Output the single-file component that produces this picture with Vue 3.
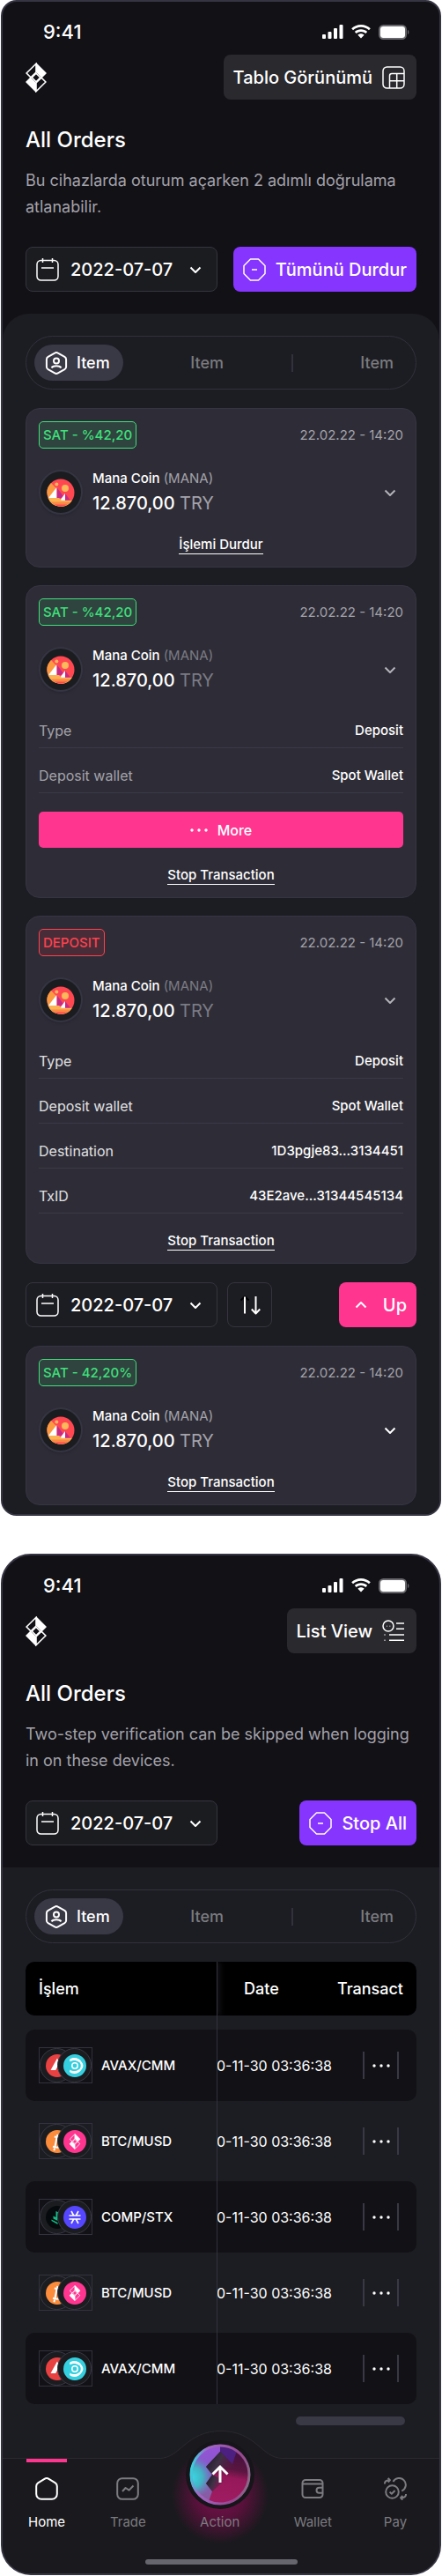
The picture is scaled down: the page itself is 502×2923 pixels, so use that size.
<template>
  <div class="screens">
    <!-- Shared icons -->
    <svg class="sprite" width="0" height="0" aria-hidden="true">
      <symbol id="i-logo" viewBox="0 0 24 34">
        <path d="M12 0 24 12 18.500 17.500 12 11ZM12 34 0 22 5.500 16.500 12 23Z" fill="#fff" />
        <path d="M12 1.200 1.100 12 6 16.900 12 11ZM12 32.800 22.900 22 18 17.100 12 23ZM12 12.200 16.800 17 12 21.800 7.200 17Z" fill="none" stroke="#fff" stroke-width="1.600" />
      </symbol>
      <symbol id="i-signal" viewBox="0 0 24 16">
        <rect x="0" y="11" width="4" height="5" rx="1" />
        <rect x="6.500" y="8" width="4" height="8" rx="1" />
        <rect x="13" y="4" width="4" height="12" rx="1" />
        <rect x="19.500" y="0" width="4" height="16" rx="1" />
      </symbol>
      <symbol id="i-wifi" viewBox="0 0 22 16">
        <path d="M11 0C6.800 0 3 1.600 0.200 4.300L2 6.200C4.400 3.900 7.500 2.700 11 2.700S17.600 3.900 20 6.200L21.800 4.300C19 1.600 15.200 0 11 0ZM11 5.200C8.200 5.200 5.700 6.200 3.800 8L5.700 9.900C7.100 8.600 9 7.900 11 7.900S14.900 8.600 16.300 9.900L18.200 8C16.300 6.200 13.800 5.200 11 5.200ZM11 10.300C9.600 10.300 8.300 10.900 7.400 11.700L11 15.500 14.600 11.700C13.700 10.900 12.400 10.300 11 10.300Z" />
      </symbol>
      <symbol id="i-battery" viewBox="0 0 35 17">
        <rect x="1" y="1" width="30" height="15" rx="4.500" fill="none" stroke="#69686d" stroke-width="2" />
        <rect x="2" y="2" width="28" height="13" rx="3" fill="#fff" />
        <path d="M33 6v5c1.800-.6 1.800-4.400 0-5Z" fill="#69686d" />
      </symbol>
      <symbol id="i-table" viewBox="0 0 26 26">
        <rect x="1" y="1" width="24" height="24" rx="4.500" />
        <path d="M8.500 25V11a2.500 2.500 0 0 1 2.500-2.500H25M8.500 16.800H25M16.700 8.500V25" />
      </symbol>
      <symbol id="i-list" viewBox="0 0 26 26">
        <circle cx="7" cy="7" r="6" />
        <path d="M5 7.300h.6M8.600 7.300h.6M16 4h9M16 10.300h9M8 17h17M8 23.300h17M2.500 17h1M2.500 23.300h1" />
      </symbol>
      <symbol id="i-calendar" viewBox="0 0 26 26">
        <rect x="1" y="2.500" width="24" height="22.500" rx="4.500" />
        <path d="M7.500 0v5M18.500 0v5M6 11h14" />
      </symbol>
      <symbol id="i-stop" viewBox="0 0 26 26">
        <path d="M8.500 1h9L25 8.500v9L17.500 25h-9L1 17.500v-9ZM10 13h6" />
      </symbol>
      <symbol id="i-down" viewBox="0 0 14 14">
        <path d="M1.500 4.500 7 10l5.500-5.500" />
      </symbol>
      <symbol id="i-up" viewBox="0 0 14 14">
        <path d="M1.500 9.500 7 4l5.500 5.500" />
      </symbol>
      <symbol id="i-sort" viewBox="0 0 24 22">
        <path d="M6 1 1.500 5.500M6 1l4.500 4.500" stroke="#000" />
        <path d="M6 1.500v19M18.500 1v19.500M13.800 15.500l4.700 5 4.700-5" />
      </symbol>
      <symbol id="i-user" viewBox="0 0 26 26">
        <path d="M11.200 1.600a3.500 3.500 0 0 1 3.600 0l7.600 4.200a3.500 3.500 0 0 1 1.700 3v8.400a3.500 3.500 0 0 1-1.700 3l-7.600 4.200a3.500 3.500 0 0 1-3.600 0l-7.600-4.200a3.500 3.500 0 0 1-1.700-3V8.800a3.500 3.500 0 0 1 1.700-3Z" />
        <circle cx="13" cy="10.500" r="3" />
        <path d="M7.500 18.300c2-2.600 9-2.600 11 0" />
      </symbol>
      <symbol id="i-dots" viewBox="0 0 20 4">
        <circle cx="2" cy="2" r="1.700" />
        <circle cx="10" cy="2" r="1.700" />
        <circle cx="18" cy="2" r="1.700" />
      </symbol>
      <symbol id="i-home" viewBox="0 0 26 26">
        <path d="M10.500 1.800 3.200 6.400A4.500 4.500 0 0 0 1.200 10.200V19a5.800 5.800 0 0 0 5.800 5.800h12a5.800 5.800 0 0 0 5.800-5.800v-8.800a4.500 4.500 0 0 0-2-3.800l-7.300-4.600a4.700 4.700 0 0 0-5 0Z" />
      </symbol>
      <symbol id="i-trade" viewBox="0 0 26 26">
        <rect x="1.200" y="1.200" width="23.600" height="23.600" rx="5.500" />
        <path d="m7 16 3.600-4 4 2.600L19.500 9.500" />
      </symbol>
      <symbol id="i-wallet" viewBox="0 0 26 26">
        <path d="M5 3h16a3.500 3.500 0 0 1 3.500 3.500v13A3.500 3.500 0 0 1 21 23H5a3.500 3.500 0 0 1-3.500-3.500v-13A3.500 3.500 0 0 1 5 3ZM1.500 7.500h23M24.500 11.800h-4a3 3 0 0 0 0 6h4" />
      </symbol>
      <symbol id="i-pay" viewBox="0 0 26 26">
        <circle cx="9.500" cy="16.500" r="7.300" />
        <path d="m6.600 16.600 2.200 2.200 3.800-3.800M10.500 5a7.600 7.600 0 1 1 9.800 10.500M.9 7.500c0-3 1.800-4.300 5.600-4.300M4.700.9l2.200 2.300-2.200 2.300M25.100 19c0 3-1.800 4.300-5.600 4.300M21.300 21l-2.200 2.300 2.200 2.300" />
      </symbol>

      <symbol id="c-mana" viewBox="0 0 32 32">
        <circle cx="16" cy="16" r="15.500" fill="#ff4751" />
        <path d="M5 5A15.500 15.500 0 0 0 1.500 21.500H21Z" fill="#fc9a42" />
        <circle cx="11.300" cy="6.500" r="2" fill="#fcb85a" />
        <circle cx="21" cy="11" r="4" fill="#fcb85a" />
        <path d="M11.300 10v12h9.500Z" fill="#c62a86" />
        <path d="M11.300 10v12H2Z" fill="#fff" />
        <path d="M21 17v8.500h6.500Z" fill="#c62a86" />
        <path d="M21 17v8.500h-6.500Z" fill="#fff" />
        <path d="M1.500 22H14l2.800 2.800H29A15.500 15.500 0 0 1 1.500 22Z" fill="#fcb352" />
        <path d="M4.500 26.500h23A15.500 15.500 0 0 1 4.500 26.500Z" fill="#fc8a45" />
        <path d="M8.500 29.600h15A15.500 15.500 0 0 1 8.500 29.600Z" fill="#ff4751" />
      </symbol>
      <symbol id="c-avax" viewBox="0 0 26 26">
        <circle cx="13" cy="13" r="13" fill="#e84142" />
        <path d="M13 4.500 5.500 18h5.700l4.300-8.300ZM17 13l-3 5h6Z" fill="#fff" />
      </symbol>
      <symbol id="c-cmm" viewBox="0 0 26 26">
        <circle cx="13" cy="13" r="13" fill="#35d0e0" />
        <circle cx="13" cy="13" r="3.200" fill="none" stroke="#fff" stroke-width="1.600" />
        <path d="M7 6C11 2.500 18 4 20.500 8.500H17C14.500 6.500 10 6.500 7.500 8.500ZM7 20c4 3.500 11 2 13.500-2.500H17C14.500 19.500 10 19.500 7.500 17.500Z" fill="#fff" />
        <path d="M16 7.500c5 2 5 9 0 11l4.500-1c2.600-3 2.600-6 0-9Z" fill="#fff" />
      </symbol>
      <symbol id="c-btc" viewBox="0 0 26 26">
        <circle cx="13" cy="13" r="13" fill="#fb8c3c" />
        <path d="m8 18.800 4 .8c5 .6 5.500-4.600 2-5.400 4-.2 4.600-5.400-.4-6L9.800 7.400M12.600 7.800 10.400 19.300M13.500 5l-.6 3M10 20.500l-.6 2.800" fill="none" stroke="#fff" stroke-width="2" />
      </symbol>
      <symbol id="c-musd" viewBox="0 0 26 26">
        <circle cx="13" cy="13" r="13" fill="#ff3590" />
        <use href="#i-logo" x="6" y="4" width="14" height="18" />
      </symbol>
      <symbol id="c-comp" viewBox="0 0 26 26">
        <circle cx="13" cy="13" r="13" fill="#070a0c" />
        <path d="m6.500 15.500 7 3.500v2l-7-4ZM8.500 11.500l5 2.500v3l-5-2.500ZM11.500 6l4 2v8l-4-2.500Z" fill="#0fbf88" />
      </symbol>
      <symbol id="c-stx" viewBox="0 0 26 26">
        <circle cx="13" cy="13" r="13" fill="#5546ff" />
        <path d="M6.500 11h13M6.500 15h13M9 6l2.700 5M17 6l-2.700 5M9 20l2.700-5M17 20l-2.700-5" stroke="#fff" stroke-width="1.600" />
      </symbol>
    </svg>

    <section v-for="screen in screens" :key="screen.id" class="phone" :class="screen.id">
      <header class="top">
        <div class="status">
          <span class="time">9:41</span>
          <div class="status-icons">
            <svg width="24" height="16" fill="#fff"><use href="#i-signal" /></svg>
            <svg width="22" height="16" fill="#fff"><use href="#i-wifi" /></svg>
            <svg width="35" height="17"><use href="#i-battery" /></svg>
          </div>
        </div>

        <div class="bar">
          <svg class="logo" width="24" height="34"><use href="#i-logo" /></svg>
          <button type="button" class="btn view">
            {{ screen.view }}
            <svg class="line thin" width="26" height="26"><use :href="screen.viewIcon" /></svg>
          </button>
        </div>

        <h1>{{ screen.title }}</h1>
        <p class="intro">{{ screen.intro }}</p>

        <div class="bar">
          <label class="date filled">
            <svg class="line thin" width="26" height="26"><use href="#i-calendar" /></svg>
            <select aria-label="Date">
              <option>2022-07-07</option>
            </select>
            <svg class="line chevron" width="14" height="14"><use href="#i-down" /></svg>
          </label>
          <button type="button" class="btn purple">
            <svg class="line thin" width="26" height="26"><use href="#i-stop" /></svg>
            {{ screen.stop }}
          </button>
        </div>
      </header>

      <main class="panel">
        <div class="tabs" role="tablist">
          <button type="button" class="tab active" role="tab" aria-selected="true">
            <svg class="line" width="26" height="26"><use href="#i-user" /></svg>
            Item
          </button>
          <button type="button" class="tab" role="tab" aria-selected="false">Item</button>
          <span class="tab-line"></span>
          <button type="button" class="tab last" role="tab" aria-selected="false">Item</button>
        </div>

        <!-- Cards -->
        <template v-if="screen.id === 'cards'">
          <template v-for="(order, index) in orders" :key="index">
            <div v-if="order.tools" class="bar tools">
              <label class="date">
                <svg class="line thin" width="26" height="26"><use href="#i-calendar" /></svg>
                <select aria-label="Date">
                  <option>2022-07-07</option>
                </select>
                <svg class="line chevron" width="14" height="14"><use href="#i-down" /></svg>
              </label>
              <button type="button" class="sort" aria-label="Sort">
                <svg class="line" width="24" height="22"><use href="#i-sort" /></svg>
              </button>
              <button type="button" class="btn pink">
                <svg class="line" width="14" height="14"><use href="#i-up" /></svg>
                Up
              </button>
            </div>

            <article class="card">
              <div class="card-head">
                <span class="badge" :class="order.color">{{ order.badge }}</span>
                <time>22.02.22 - 14:20</time>
              </div>
              <div class="coin">
                <span class="coin-icon">
                  <svg width="32" height="32"><use href="#c-mana" /></svg>
                </span>
                <div class="coin-text" :class="{ dim: order.rows }">
                  <div class="coin-name">Mana Coin <span>(MANA)</span></div>
                  <div class="coin-amount">12.870,00 <span>TRY</span></div>
                </div>
                <button type="button" class="toggle" :class="{ bright: order.tools }" aria-label="Details">
                  <svg class="line" width="14" height="14"><use href="#i-down" /></svg>
                </button>
              </div>
              <dl v-if="order.rows" class="details" :class="{ bright: order.color === 'red' }">
                <div v-for="row in order.rows" :key="row[0]">
                  <dt>{{ row[0] }}</dt>
                  <dd>{{ row[1] }}</dd>
                </div>
              </dl>
              <button v-if="order.more" type="button" class="more">
                <svg width="20" height="4" fill="#fff"><use href="#i-dots" /></svg>
                More
              </button>
              <a href="#" class="stop-link" @click.prevent>{{ order.link }}</a>
            </article>
          </template>
        </template>

        <!-- Table -->
        <div v-else class="table-wrap">
          <table>
            <thead>
              <tr>
                <th class="col-pair">İşlem</th>
                <th class="col-date">Date</th>
                <th class="col-action">Transact</th>
              </tr>
            </thead>
            <tbody>
              <tr v-for="(pair, index) in pairs" :key="index">
                <td class="col-pair">
                  <span class="coins">
                    <span><svg width="26" height="26"><use :href="pair.icons[0]" /></svg></span>
                    <span><svg width="26" height="26"><use :href="pair.icons[1]" /></svg></span>
                  </span>
                  {{ pair.name }}
                </td>
                <td class="col-date">0-11-30 03:36:38</td>
                <td class="col-action">
                  <button type="button" aria-label="More">
                    <svg width="20" height="4" fill="#fff"><use href="#i-dots" /></svg>
                  </button>
                </td>
              </tr>
            </tbody>
          </table>
          <div class="scroll-thumb"></div>
        </div>
      </main>

      <nav v-if="screen.id === 'table'" class="nav">
        <svg class="bump" width="140" height="34" viewBox="0 0 140 34">
          <path d="M0 31.500C24 31.500 30 .5 70 .5s46 31 70 31V34H0Z" fill="#1a191e" />
          <path d="M0 31.500C24 31.500 30 .5 70 .5s46 31 70 31" fill="none" stroke="#2a292f" />
        </svg>
        <a v-for="item in nav" :key="item.label" href="#" class="nav-item" :class="{ active: item.active, edge: item.edge, action: item.action }" @click.prevent>
          <span v-if="item.action" class="orb">
            <svg width="80" height="80" viewBox="0 0 80 80">
              <defs>
                <linearGradient id="orb-base" x1="0.700" y1="0.100" x2="0.550" y2="0.900">
                  <stop offset="0" stop-color="#3f1040" />
                  <stop offset="0.400" stop-color="#5a1540" />
                  <stop offset="0.550" stop-color="#96185a" />
                  <stop offset="1" stop-color="#a01c62" />
                </linearGradient>
                <linearGradient id="orb-purple" x1="0.200" y1="0" x2="0.100" y2="1">
                  <stop offset="0" stop-color="#9a50d8" />
                  <stop offset="0.500" stop-color="#7f5fc8" />
                  <stop offset="1" stop-color="#8d5a8f" />
                </linearGradient>
                <radialGradient id="orb-cyan" gradientUnits="userSpaceOnUse" cx="8" cy="43" r="24">
                  <stop offset="0" stop-color="#38d8e4" />
                  <stop offset="0.500" stop-color="#42b4c4" />
                  <stop offset="1" stop-color="#5f8fb8" stop-opacity="0" />
                </radialGradient>
                <linearGradient id="orb-fold" x1="0" y1="0.300" x2="1" y2="0.700">
                  <stop offset="0" stop-color="#1f1c28" />
                  <stop offset="0.400" stop-color="#3f3046" />
                  <stop offset="1" stop-color="#5a1642" stop-opacity="0" />
                </linearGradient>
                <linearGradient id="orb-rim" x1="0" y1="0.400" x2="1" y2="0.600">
                  <stop offset="0" stop-color="#39d2dd" />
                  <stop offset="0.200" stop-color="#a068c6" />
                  <stop offset="0.800" stop-color="#96488f" />
                  <stop offset="1" stop-color="#8a6a88" />
                </linearGradient>
                <clipPath id="orb-clip"><circle cx="40" cy="40" r="34" /></clipPath>
              </defs>
              <circle cx="40" cy="40" r="39" fill="#16151a" />
              <g clip-path="url(#orb-clip)">
                <rect width="80" height="80" fill="url(#orb-base)" />
                <path d="M0 0h40v14L24 31l7 9-7 10 7 9-5 14H0Z" fill="url(#orb-purple)" />
                <path d="M0 0h40v14L24 31l7 9-7 10 7 9-5 14H0Z" fill="url(#orb-cyan)" />
                <path d="M40 0v14l14 14L60 10Z" fill="#4c2080" />
                <path d="M40 14 24 31l7 9 9-9 20 3Z" fill="url(#orb-fold)" />
                <path d="m31 40-7 10 7 9 14-12Z" fill="url(#orb-fold)" />
              </g>
              <circle cx="40" cy="40" r="33" fill="none" stroke="url(#orb-rim)" stroke-width="3" />
              <path d="M40 49V32M31.500 39.500 40 31l8.500 8.500" fill="none" stroke="#fff" stroke-width="3" />
            </svg>
          </span>
          <svg v-else class="line" width="26" height="26"><use :href="item.icon" /></svg>
          <span class="nav-label">{{ item.label }}</span>
        </a>
        <span class="home-bar"></span>
      </nav>
    </section>
  </div>
</template>

<script setup>
const screens = [
  {
    id: 'cards',
    view: 'Tablo Görünümü',
    viewIcon: '#i-table',
    title: 'All Orders',
    intro: 'Bu cihazlarda oturum açarken 2 adımlı doğrulama atlanabilir.',
    stop: 'Tümünü Durdur'
  },
  {
    id: 'table',
    view: 'List View',
    viewIcon: '#i-list',
    title: 'All Orders',
    intro: 'Two-step verification can be skipped when logging in on these devices.',
    stop: 'Stop All'
  }
]

const orders = [
  { badge: 'SAT - %42,20', color: 'green', link: 'İşlemi Durdur' },
  {
    badge: 'SAT - %42,20',
    color: 'green',
    rows: [
      ['Type', 'Deposit'],
      ['Deposit wallet', 'Spot Wallet']
    ],
    more: true,
    link: 'Stop Transaction'
  },
  {
    badge: 'DEPOSIT',
    color: 'red',
    rows: [
      ['Type', 'Deposit'],
      ['Deposit wallet', 'Spot Wallet'],
      ['Destination', '1D3pgje83...3134451'],
      ['TxID', '43E2ave...31344545134']
    ],
    link: 'Stop Transaction'
  },
  { badge: 'SAT - 42,20%', color: 'green', tools: true, link: 'Stop Transaction' }
]

const avax = { name: 'AVAX/CMM', icons: ['#c-avax', '#c-cmm'] }
const btc = { name: 'BTC/MUSD', icons: ['#c-btc', '#c-musd'] }
const comp = { name: 'COMP/STX', icons: ['#c-comp', '#c-stx'] }
const pairs = [avax, btc, comp, btc, avax]

const nav = [
  { label: 'Home', icon: '#i-home', active: true, edge: true },
  { label: 'Trade', icon: '#i-trade' },
  { label: 'Action', action: true },
  { label: 'Wallet', icon: '#i-wallet' },
  { label: 'Pay', icon: '#i-pay', edge: true }
]
</script>

<style>
body {
  margin: 0;
  background: #fff;
}
</style>

<style scoped>
.screens {
  display: flex;
  flex-direction: column;
  gap: 43px;
  padding: 0 1px;
  font-family: Inter, "Liberation Sans", sans-serif;
  font-size: 16px;
  color: #fff;
}

.screens *,
.screens *::before,
.screens *::after {
  box-sizing: border-box;
}

.sprite {
  position: absolute;
}

svg {
  display: block;
  flex-shrink: 0;
}

button,
select {
  margin: 0;
  padding: 0;
  border: none;
  background: none;
  color: inherit;
  font: inherit;
  cursor: pointer;
}

.line {
  fill: none;
  stroke: currentColor;
  stroke-width: 2;
  stroke-linejoin: round;
}

.thin {
  stroke-width: 1.5;
}

.phone {
  border: 2px solid #353442;
  background: #121116;
  overflow: hidden;
}

.phone.cards {
  border-radius: 18px;
}

.phone.table {
  border-radius: 34px;
}

/* Header */
.top {
  padding: 20px 26px 25px;
}

.status {
  display: flex;
  align-items: center;
  justify-content: space-between;
  height: 28px;
  margin-bottom: 12px;
  padding: 0 8px 0 20px;
  font-size: 22px;
  font-weight: 500;
}

.status-icons {
  display: flex;
  align-items: center;
  gap: 9px;
}

.bar {
  display: flex;
  align-items: center;
  justify-content: space-between;
}

.btn {
  display: flex;
  align-items: center;
  gap: 11px;
  height: 51px;
  padding: 0 11px;
  border-radius: 8px;
  font-size: 20px;
  font-weight: 500;
  white-space: nowrap;
}

.view {
  padding-right: 13px;
  background: #2a292e;
}

.purple {
  background: #8635ff;
}

.pink {
  gap: 18px;
  margin-left: auto;
  padding-left: 18px;
  background: #ff3590;
}

h1 {
  margin: 31px 0 16px;
  font-size: 24px;
  font-weight: 500;
  line-height: 30px;
}

.intro {
  margin: 0 0 30px;
  font-size: 18px;
  line-height: 30px;
  color: #a3a2aa;
}

.date {
  display: flex;
  align-items: center;
  height: 51px;
  padding: 0 17px 0 11px;
  border: 1px solid #35343f;
  border-radius: 8px;
  font-size: 20px;
  font-weight: 500;
}

.date.filled {
  background: #1b1c20;
}

.date select {
  appearance: none;
  margin: 0 18px 0 13px;
}

/* Panel */
.panel {
  padding: 25px 26px 10px;
  background: #1c1d22;
}

.cards .panel {
  border-radius: 30px 30px 0 0;
}

.table .panel {
  padding-bottom: 37px;
}

.tabs {
  display: flex;
  align-items: center;
  justify-content: space-between;
  height: 61px;
  margin-bottom: 21px;
  padding: 0 25px 0 9px;
  border: 1px solid #32313d;
  border-radius: 31px;
}

.tab {
  display: flex;
  align-items: center;
  gap: 10px;
  height: 41px;
  font-size: 18px;
  font-weight: 500;
  color: #7b7b80;
}

.tab.active {
  padding: 0 15px 0 12px;
  border-radius: 21px;
  background: #393845;
  color: #fff;
}

.tab-line {
  width: 2px;
  height: 20px;
  background: #32313d;
}

/* Order card */
.card {
  display: flex;
  flex-direction: column;
  margin-bottom: 20px;
  padding: 14px;
  border: 1px solid #353442;
  border-radius: 16px;
  background: #2e2d37;
}

.card:last-child {
  margin-bottom: 0;
}

.card-head {
  display: flex;
  align-items: center;
  justify-content: space-between;
  margin-bottom: 24px;
}

.card-head time {
  font-size: 15px;
  color: #a3a2aa;
}

.badge {
  padding: 0 4px;
  border: 1px solid;
  border-radius: 5px;
  font-size: 15px;
  font-weight: 500;
  line-height: 29px;
}

.badge.green {
  background: #2f433f;
  color: #3fe07b;
}

.badge.red {
  background: #482d39;
  color: #ff414d;
}

.coin {
  display: flex;
  align-items: center;
  gap: 11px;
  margin-bottom: 24px;
}

.coin-icon {
  display: flex;
  align-items: center;
  justify-content: center;
  width: 50px;
  height: 51px;
  border: 2px solid #353442;
  border-radius: 50%;
  background: #1b1c20;
  box-shadow: 0 2px 2px #292832;
}

.coin-name {
  margin-bottom: 5px;
  font-size: 15px;
  font-weight: 500;
  line-height: 20px;
}

.coin-amount {
  font-size: 20px;
  font-weight: 500;
  line-height: 26px;
}

.coin-text span {
  font-weight: 400;
  color: #a3a2aa;
}

.coin-text.dim span {
  color: #7b7b84;
}

.toggle {
  margin-left: auto;
  padding: 8px;
  color: #b3b2b9;
}

.toggle.bright {
  color: #fff;
}

.details {
  display: flex;
  flex-direction: column;
  gap: 11px;
  margin: 0 0 21px;
}

.details div {
  display: flex;
  align-items: center;
  justify-content: space-between;
  height: 40px;
  padding-top: 8px;
  padding-bottom: 8px;
  border-bottom: 1px solid #393845;
}

.details dt {
  color: #a3a2aa;
}

.details.bright dt {
  color: #e0e0e3;
}

.details dd {
  margin: 0;
  font-size: 15px;
  font-weight: 500;
}

.more {
  display: flex;
  align-items: center;
  justify-content: center;
  gap: 11px;
  height: 41px;
  margin-bottom: 21px;
  border-radius: 5px;
  background: #ff3590;
  font-weight: 500;
}

.stop-link {
  align-self: center;
  line-height: 20px;
  border-bottom: 1px solid #fff;
  font-size: 15px;
  font-weight: 500;
  color: #fff;
  text-decoration: none;
}

.tools {
  gap: 11px;
  margin: 21px 0;
}

.sort {
  display: flex;
  align-items: center;
  justify-content: center;
  width: 51px;
  height: 51px;
  border: 1px solid #35343f;
  border-radius: 8px;
}

/* Table */
.table-wrap {
  position: relative;
}

table,
tbody {
  display: flex;
  flex-direction: column;
}

table {
  position: relative;
  gap: 16px;
}

/* Edge of the pinned column */
table::after {
  content: '';
  position: absolute;
  top: 0;
  bottom: 0;
  left: 217px;
  width: 1px;
  background: #32313d;
}

thead,
tbody tr {
  border-radius: 10px;
}

thead {
  overflow: hidden;
  background: #000;
}

tbody {
  gap: 5px;
}

tr {
  display: flex;
  align-items: center;
  height: 81px;
}

thead tr {
  height: 61px;
}

tbody tr:nth-child(odd) {
  background: #121116;
}

th,
td {
  padding: 0;
  text-align: left;
}

th {
  font-size: 18px;
  font-weight: 500;
}

td.col-pair {
  display: flex;
  align-items: center;
  gap: 10px;
  font-size: 15px;
  font-weight: 500;
}

.col-pair {
  width: 217px;
  padding-left: 15px;
}

th.col-pair {
  line-height: 61px;
  box-shadow: 4px 0 6px #141318;
}

td.col-date {
  white-space: nowrap;
}

th.col-date {
  padding-left: 31px;
}

.col-action {
  margin-left: auto;
  padding-right: 20px;
}

th.col-action {
  padding-right: 15px;
}

.coins {
  display: flex;
  width: 61px;
  height: 41px;
  border: 1px solid #32313d;
}

.coins span {
  display: flex;
  align-items: center;
  justify-content: center;
  flex-shrink: 0;
  width: 39px;
  height: 39px;
  border: 1px solid #393845;
  border-radius: 50%;
  background: #1b1c20;
}

.coins span + span {
  margin-left: -19px;
}

.col-action button {
  display: flex;
  align-items: center;
  justify-content: center;
  width: 41px;
  height: 31px;
  border: solid #393845;
  border-width: 0 2px;
}

.scroll-thumb {
  width: 124px;
  height: 10px;
  margin: 14px 13px 0 auto;
  border-radius: 5px;
  background: #393845;
}

/* Bottom navigation */
.nav {
  position: relative;
  display: flex;
  justify-content: space-between;
  height: 131px;
  padding: 0 27px;
  border-top: 1px solid #2a292f;
  background: #1a191e;
}

.bump {
  position: absolute;
  top: -32px;
  left: 50%;
  margin-left: -70px;
}

.nav-item {
  position: relative;
  display: flex;
  flex-direction: column;
  align-items: center;
  min-width: 40px;
  padding-top: 21px;
  color: #7b7b80;
  text-decoration: none;
}

.nav-item.edge {
  width: 46px;
}

.nav-item.active {
  color: #fff;
}

.nav-item.active::before {
  content: '';
  position: absolute;
  top: 0;
  left: 0;
  right: 0;
  height: 4px;
  background: #ff3590;
}

.nav-item.action {
  width: 70px;
}

.nav-label {
  position: relative;
  margin-top: 15px;
  font-size: 15px;
  line-height: 20px;
}

.action .nav-label {
  margin-top: 41px;
}

.orb {
  position: absolute;
  top: -22px;
  left: -5px;
}

.orb svg {
  position: relative;
}

.orb::before {
  content: '';
  position: absolute;
  top: 8px;
  left: -15px;
  width: 110px;
  height: 110px;
  border-radius: 50%;
  background: radial-gradient(closest-side, #7a0f4a 0%, #58113b 50%, #1a191e00 100%);
}

.home-bar {
  position: absolute;
  bottom: 10px;
  left: 50%;
  width: 173px;
  height: 6px;
  margin-left: -86px;
  border-radius: 3px;
  background: #66656e;
}
</style>
